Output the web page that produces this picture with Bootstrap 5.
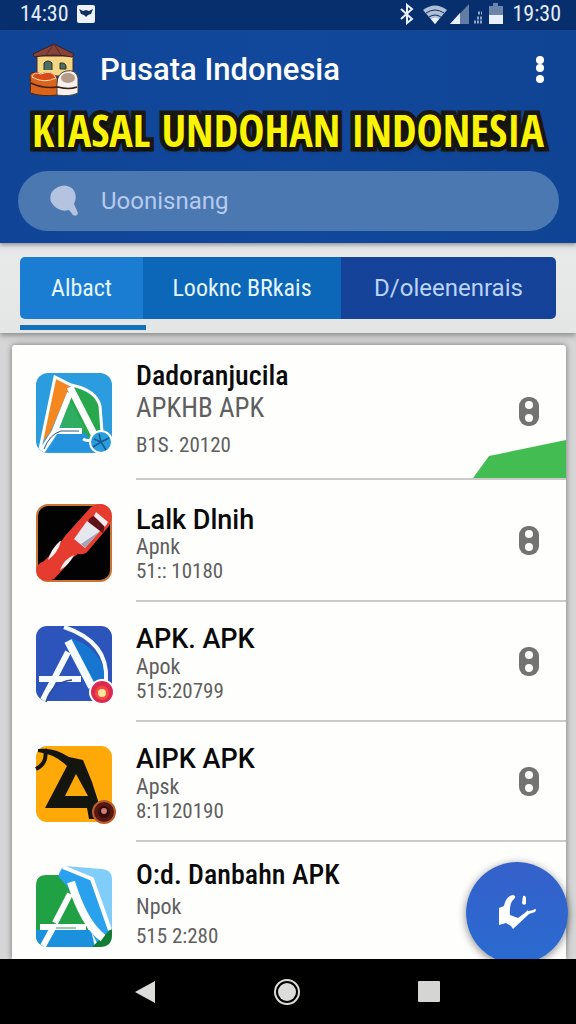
<!DOCTYPE html>
<html lang="id">
<head>
<meta charset="utf-8">
<meta name="viewport" content="width=device-width, initial-scale=1">
<title>Pusata Indonesia</title>
<link href="https://cdn.jsdelivr.net/npm/bootstrap@5.3.0/dist/css/bootstrap.min.css" rel="stylesheet">
<style>
body{font-family:Roboto,"Liberation Sans",sans-serif;background:#d6d6d6}
svg{display:block;flex-shrink:0}
.narrow,.status,.sub,.date{font-family:"Roboto Condensed","Liberation Sans Narrow",sans-serif}
.status{background:#082f6d;color:#e4ecf8;height:30px;padding:0 15px 2px 20px;font-size:22px;line-height:26px}
.top{background:linear-gradient(90deg,#0f4496,#12489c 50%,#0f4494);color:#fff;padding:10px 16px 12px;box-shadow:0 2px 4px #0005;position:relative}
.apptitle{font-size:31px;line-height:60px;margin:0 0 0 20px}
.banner{font-family:"Open Sans Condensed","Roboto Condensed","Liberation Sans Narrow",sans-serif;font-weight:700;font-size:44px;line-height:60px;color:#fbf305;-webkit-text-stroke:9px #1b1811;paint-order:stroke fill;text-shadow:0 3px 5px #0008;white-space:nowrap;text-align:center;margin:0 0 11px}
.search{background:#4c78b2;border-radius:30px;height:60px;padding:0 32px;margin:0 1px 0 2px}
.search input{background:none;border:0;outline:0;color:#fff;font-size:24px;line-height:32px;margin-left:21px;min-width:0}
.search input::placeholder{color:#b5cbee;opacity:1}
.strip{background:linear-gradient(#dfe1e2,#e8eaea 12px,#e4e6e5);padding:14px 20px 3px;box-shadow:0 2px 6px #0006}
.tabs button{border:0;color:#e6f6ff;font-size:24px;line-height:30px;padding:16px 0;white-space:nowrap}
.tabs{border-radius:5px;overflow:hidden}
.t1{background:#1b7dd2;flex:123}.t2{background:#0c67b8;flex:198}.tabs .t3{background:#15439a;color:#bcd4fa;flex:215}
.marker{background:#1371b9;height:5px;width:126px;margin-top:6px}
.area{overflow:hidden;padding:12px 10px 0 12px}
.sheet{background:#fefefc;box-shadow:0 0 6px #0007;border-radius:3px 3px 0 0}
.item{padding-left:24px}
.body-col{border-bottom:2px solid #cbcaca;margin-left:24px;min-width:0}
.item:last-child .body-col{border:0}
.lines{height:118px;padding-top:22px}
.first .lines{height:133px;padding-top:16px}
.second .lines{height:120px;padding-top:25px}
.pic{padding-top:24px;width:76px;flex-shrink:0}
.pic svg{overflow:visible}
.first .pic{padding-top:28px}
.last .lines{height:117px;padding-top:18px}
.name{font-size:27px;line-height:30px;font-weight:500;color:#0a0a0a;margin:0}
.name.narrow{font-size:28px}
.sub,.date{font-size:22px;line-height:25px;color:#5f5f5f;margin:0}
.date{font-size:21px}
.second .sub,.second .date{line-height:24px}
.first .sub{font-size:27px;line-height:34px}
.first .date{line-height:40px}
.last .sub{line-height:34px}
.last .date{line-height:24px}
.more{border:0;background:none;padding:0;margin:0 27px 0 0}
.wedge{right:0;bottom:0}
.fab{position:absolute;right:8px;bottom:-5px;width:102px;height:102px;border:0;background:linear-gradient(#3560ca,#2a6bd0);box-shadow:0 2px 8px #0007}
.sys{background:#000;height:65px;padding:0 136px 0 134px}
.sys button{border:0;background:none;padding:0}
</style>
</head>
<body>
<div class="d-flex flex-column min-vh-100">
<div class="status d-flex align-items-center">
  <span>14:30</span>
  <svg class="ms-2 me-auto" width="18" height="18" viewBox="0 0 18 18"><rect width="18" height="18" rx="2" fill="#eef3fb"/><path d="M2 4l4 2 3-1 3 1 4-2-2 5-3 1-2 2-2-2-3-1z" fill="#12305f"/></svg>
  <svg width="104" height="22" viewBox="0 0 104 22" fill="#e9f0fa" class="me-2"><path d="M1 6l11 10-5 4V2l5 4L1 16" fill="none" stroke="#e9f0fa" stroke-width="2"/><path d="M23 7q12-9 24 0L35 21z" opacity=".75"/><path d="M26 10q9-6 18 0M29 14q6-4 12 0" fill="none" stroke="#08306b" stroke-width="1"/><path d="M31 16q4-3 8 0l-4 5z"/><path d="M69 1v20H50z" opacity=".4"/><path d="M60 10v11H50z"/><path d="M74 19h8M77 15h5M78 10h4" stroke="#8ca5cc" stroke-width="3" stroke-dasharray="2 1"/><path d="M89 3h4V0h5v3h5v18H89z" opacity=".45"/><path d="M89 12h14v9H89z"/></svg>
  <span>19:30</span>
</div>
<header class="top">
  <div class="d-flex align-items-center ps-2">
    <svg class="ms-1" width="52" height="56" viewBox="0 0 52 56"><path d="M9 14h36v20H9z" fill="#f4d684" stroke="#4a2b17"/><path d="M5 12L26 2l20 10-2 3q-18-4-38 0z" fill="#85433a" stroke="#411e1c"/><path d="M26 2l-8 11M26 2l7 11" stroke="#5c2922"/><path d="M16 28v-7q4-4 8 0v7M32 21q7-1 6 6h-6z" fill="#476f62" stroke="#332e21"/><path d="M2 33q1 14 0 18 12 4 28 2V37q-7-10-17-5-8-4-11 1z" fill="#d9641e" stroke="#4a2515"/><path d="M4 35q2-6 9-3 11-5 15 4-12 6-24-1" fill="#d84b18" stroke="#ffdcb0"/><path d="M29 53q13 2 21-2V36q-2-9-12-7-9 2-9 13z" fill="#f4f1ee" stroke="#444"/><ellipse cx="40" cy="36" rx="7" ry="5" fill="#b49a87"/><path d="M3 41q12 6 27 4 11 3 19 0" fill="none" stroke="#46200f" stroke-width="1.5"/></svg>
    <h1 class="apptitle me-auto">Pusata Indonesia</h1>
    <button class="border-0 bg-transparent p-0 me-2" aria-label="Menu"><svg width="24" height="32" viewBox="0 0 24 32" fill="#fff"><circle cx="12" cy="6" r="4"/><circle cx="12" cy="14" r="4"/><circle cx="12" cy="25" r="4"/></svg></button>
  </div>
  <h2 class="banner">KIASAL UNDOHAN INDONESIA</h2>
  <label class="search d-flex align-items-center">
    <svg width="28" height="32" viewBox="0 0 28 32"><path d="M8 2q8-4 15 2 5 7 1 15l4 9q-1 4-5 2l-4-5Q8 28 1 17-2 7 8 2z" fill="#b4c3df"/></svg>
    <input class="flex-grow-1" type="text" aria-label="Uoonisnang" placeholder="Uoonisnang">
  </label>
</header>
<div class="strip">
  <div class="tabs d-flex"><button class="t1 narrow">Albact</button><button class="t2 narrow">Looknc BRkais</button><button class="t3">D/oleenenrais</button></div>
  <div class="marker"></div>
</div>
<main class="area position-relative flex-grow-1">
<div class="sheet">
  <article class="item first d-flex">
    <div class="pic"><svg width="78" height="82" viewBox="0 0 78 82"><rect width="76" height="80" rx="12" fill="#2b9ddf"/><path d="M19 4l15 9L14 60 4 72z" fill="#f48720"/><path d="M34 13q24 6 30 20l1 33q-10 5-17 0L26 50z" fill="#28a84d"/><path d="M34 28L49 56 24 54z" fill="#2fae62"/><path d="M23 60h27l8 18H12z" fill="#2492dc"/><path d="M4 76L19 4l16 8q25 5 29 21l2 26M47 66q5 3 10 0" fill="none" stroke="#fff" stroke-width="3"/><path d="M34 14L60 65" stroke="#fff" stroke-width="7"/><path d="M34 20L18 60L6 78" fill="none" stroke="#fff" stroke-width="6"/><path d="M20 58h26" stroke="#fff" stroke-width="6"/><path d="M8 76q6-15 17-18h18" fill="none" stroke="#25588c" stroke-width="1"/><circle cx="65" cy="69" r="11" fill="#2a9ddd" stroke="#fff" stroke-width="2"/><path d="M65 69l-2-8M65 69l8-4M65 69l5 8M65 69l-8 5M65 69l-7-3" stroke="#15598e" stroke-width="1.5"/></svg></div>
    <div class="body-col d-flex flex-grow-1 align-items-center position-relative">
      <div class="lines flex-grow-1 align-self-start"><h3 class="name narrow">Dadoranjucila</h3><p class="sub">APKHB APK</p><p class="date">B1S. 20120</p></div>
      <svg class="wedge position-absolute" width="93" height="39" viewBox="0 0 93 39"><path d="M0 39l16-22L93 1v38z" fill="#43bd51"/></svg>
      <button class="more" aria-label="Opsi"><svg width="20" height="29" viewBox="0 0 20 29"><rect width="20" height="29" rx="9" fill="#737373"/><circle cx="10" cy="8" r="4" fill="#fefefc"/><circle cx="10" cy="21" r="4" fill="#fefefc"/></svg></button>
    </div>
  </article>
  <article class="item second d-flex">
    <div class="pic"><svg width="78" height="80" viewBox="0 0 78 80"><rect x="1" y="1" width="74" height="76" rx="11" fill="#020202" stroke="#c87535" stroke-width="2"/><path d="M55 3Q66-4 74 5q4 9-1 17L52 47q-3 4-10 3-7 4-11 11L18 75q-11 5-17-4-3-10 7-14Q20 46 29 32z" fill="#e63c30"/><path d="M24 37q-9 8-12 19 10-7 13-19zM38 51q-10 4-14 15 9-5 14-15z" fill="#f6eeee"/><path d="M53 15l4-3 12 9-2 8-15-10z" fill="#5e1218"/><path d="M51 17l13 10-15 17-11-9z" fill="#e6e7ef"/><path d="M64 27L49 44l-4-4z" fill="#a4a6b8"/><path d="M60 8l12 10-3 5-11-11z" fill="#f6eeee"/></svg></div>
    <div class="body-col d-flex flex-grow-1 align-items-center">
      <div class="lines flex-grow-1 align-self-start"><h3 class="name">Lalk Dlnih</h3><p class="sub">Apnk</p><p class="date">51:: 10180</p></div>
      <button class="more" aria-label="Opsi"><svg width="20" height="29" viewBox="0 0 20 29"><rect width="20" height="29" rx="9" fill="#737373"/><circle cx="10" cy="8" r="4" fill="#fefefc"/><circle cx="10" cy="21" r="4" fill="#fefefc"/></svg></button>
    </div>
  </article>
  <article class="item d-flex">
    <div class="pic"><svg width="79" height="80" viewBox="0 0 79 80"><rect width="76" height="75" rx="11" fill="#2d54ba"/><path d="M35 12q34 12 34 44L55 58 32 15z" fill="#1777d0"/><path d="M28 1q45 15 42 54" fill="none" stroke="#f5fbff" stroke-width="4"/><path d="M32 15L56 61" stroke="#f5fbff" stroke-width="8"/><path d="M32 26L19 51M3 53h42M19 51L7 74" fill="none" stroke="#f5fbff" stroke-width="6"/><path d="M10 76Q16 56 36 54" fill="none" stroke="#2a4b9d" stroke-width="1.5"/><circle cx="66" cy="66" r="12" fill="#dc2951" stroke="#fff" stroke-width="2"/><circle cx="66" cy="67" r="7" fill="#f44b3d"/><circle cx="66" cy="67" r="4" fill="#ffe4a1"/></svg></div>
    <div class="body-col d-flex flex-grow-1 align-items-center">
      <div class="lines flex-grow-1 align-self-start"><h3 class="name">APK. APK</h3><p class="sub">Apok</p><p class="date">515:20799</p></div>
      <button class="more" aria-label="Opsi"><svg width="20" height="29" viewBox="0 0 20 29"><rect width="20" height="29" rx="9" fill="#737373"/><circle cx="10" cy="8" r="4" fill="#fefefc"/><circle cx="10" cy="21" r="4" fill="#fefefc"/></svg></button>
    </div>
  </article>
  <article class="item d-flex">
    <div class="pic"><svg width="80" height="80" viewBox="0 0 80 80"><rect width="76" height="76" rx="11" fill="#ffa909"/><path d="M2 3Q18 1 33 11l14 3 9 22 9 28-6 9-6 0-2-11H9l22-42Q19 8 2 6z" fill="#151510"/><path d="M40 28l12 22H29z" fill="#ffa909"/><path d="M9 3q3 14-9 20" fill="none" stroke="#151510" stroke-width="4"/><circle cx="68" cy="66" r="11" fill="#581812" stroke="#b85c31" stroke-width="2"/><circle cx="68" cy="66" r="6" fill="#300d0c"/><circle cx="68" cy="65" r="3" fill="#cf7c6c"/></svg></div>
    <div class="body-col d-flex flex-grow-1 align-items-center">
      <div class="lines flex-grow-1 align-self-start"><h3 class="name">AIPK APK</h3><p class="sub">Apsk</p><p class="date">8:1120190</p></div>
      <button class="more" aria-label="Opsi"><svg width="20" height="29" viewBox="0 0 20 29"><rect width="20" height="29" rx="9" fill="#737373"/><circle cx="10" cy="8" r="4" fill="#fefefc"/><circle cx="10" cy="21" r="4" fill="#fefefc"/></svg></button>
    </div>
  </article>
  <article class="item last d-flex">
    <div class="pic"><svg width="78" height="82" viewBox="0 0 78 82"><path d="M28 0l38 3q10 1 10 10v57L22 18q0-15 6-18z" fill="#7fcdf8"/><path d="M0 20Q0 9 10 9h17l30 65-9 7H12Q0 80 0 69z" fill="#20a144"/><path d="M0 64h55l4 17H12Q0 80 0 69z" fill="#1b91de"/><path d="M26 3l30 10 19 50v8L62 79 35 25 22 10z" fill="#2aa1ed"/><path d="M76 62v7q0 12-12 12h-8z" fill="#137d36"/><path d="M27 1l29 12 18 51" fill="none" stroke="#fff" stroke-width="4"/><path d="M35 16Q48 58 67 72" fill="none" stroke="#fff" stroke-width="8"/><path d="M34 28L19 57" fill="none" stroke="#fff" stroke-width="6"/><path d="M4 61h46M18 60L7 80" fill="none" stroke="#fff" stroke-width="6"/><path d="M20 62h20" stroke="#2c9d5c" stroke-width="1"/></svg></div>
    <div class="body-col flex-grow-1">
      <div class="lines"><h3 class="name narrow">O:d. Danbahn APK</h3><p class="sub">Npok</p><p class="date">515 2:280</p></div>
    </div>
  </article>
</div>
<button class="fab rounded-circle d-flex align-items-center justify-content-center" aria-label="Unduh"><svg width="40" height="38" viewBox="0 0 40 38" fill="#fff"><path d="M2 14l5-2Q9 2 16 1q4 1 1 4-5 4-4 16l8 3 8-6q2-3 2-1 4 0 7-2 2 0 0 3l-6 2-16 15-2-3-5-3-7 2z"/><path d="M26 2q3-1 3 3v5q-3 2-4-1z"/></svg></button>
</main>
<nav class="sys d-flex align-items-center justify-content-between">
  <button aria-label="Kembali"><svg width="22" height="24" viewBox="0 0 22 24"><path d="M1 12L21 1v22z" fill="#dcdcda"/></svg></button>
  <button aria-label="Beranda"><svg width="26" height="28" viewBox="0 0 26 28"><circle cx="13" cy="14" r="12" fill="none" stroke="#dcdcda" stroke-width="2"/><circle cx="13" cy="14" r="9" fill="#dcdcda"/></svg></button>
  <button aria-label="Terbaru"><svg width="22" height="22" viewBox="0 0 22 22"><rect width="22" height="21" rx="1" fill="#d5d5d3"/></svg></button>
</nav>
</div>
<script src="https://cdn.jsdelivr.net/npm/bootstrap@5.3.0/dist/js/bootstrap.bundle.min.js"></script>
</body>
</html>
